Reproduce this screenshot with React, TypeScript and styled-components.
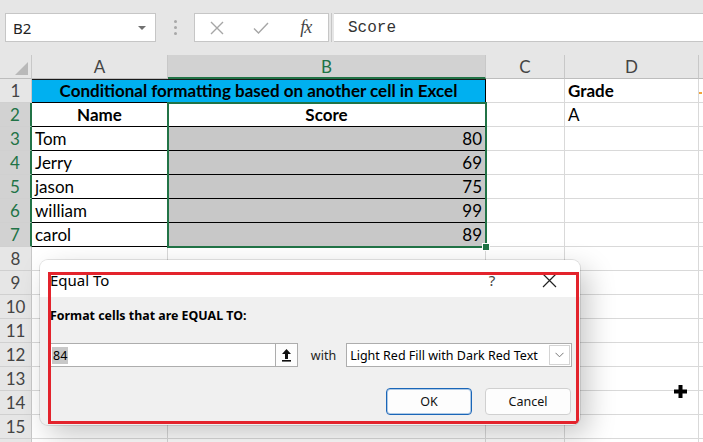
import React from 'react'
import styled, { createGlobalStyle } from 'styled-components'

const GREEN = '#217346'

const GlobalStyle = createGlobalStyle`
  html, body {
    margin: 0;
    padding: 0;
    background: #fff;
  }
  body {
    font-family: Lato, 'Noto Sans', sans-serif;
    overflow: hidden;
  }
`

const Page = styled.div`
  position: relative;
  width: 703px;
  height: 442px;
  overflow: hidden;
  background: #fff;
`

/* ---------- formula bar ---------- */

const FormulaBar = styled.div`
  height: 55px;
  box-sizing: border-box;
  padding: 13px 0 0 5px;
  background: #e6e6e6;
  display: flex;
  align-items: flex-start;
`

const NameBox = styled.div`
  width: 151px;
  height: 29px;
  box-sizing: border-box;
  background: #fff;
  border: 1px solid #c6c6c6;
  display: flex;
  align-items: center;
  justify-content: space-between;
  padding: 0 9px 0 7px;
  font-family: 'Noto Sans', sans-serif;
  font-size: 15px;
  color: #222;
`

const Caret = styled.span`
  width: 0;
  height: 0;
  border-left: 4px solid transparent;
  border-right: 4px solid transparent;
  border-top: 4px solid #707070;
`

const Grip = styled.div`
  width: 38px;
  height: 29px;
  display: flex;
  flex-direction: column;
  align-items: center;
  justify-content: center;
  gap: 3px;

  & span {
    width: 3px;
    height: 3px;
    border-radius: 50%;
    background: #a8a8a8;
  }
`

const ButtonGroup = styled.div`
  width: 135px;
  height: 29px;
  box-sizing: border-box;
  background: #fff;
  border: 1px solid #c6c6c6;
  display: flex;
`

const BarButton = styled.div`
  flex: 1;
  display: flex;
  align-items: center;
  justify-content: center;
`

const Fx = styled.span`
  font-family: 'Liberation Serif', serif;
  font-style: italic;
  font-size: 18px;
  color: #444;
  letter-spacing: -1px;
`

const BarDivider = styled.div`
  width: 1px;
  height: 29px;
  margin: 0 2px 0 2px;
  background: #c6c6c6;
`

const FormulaInput = styled.div`
  flex: 1;
  height: 29px;
  box-sizing: border-box;
  background: #fff;
  border-top: 1px solid #c6c6c6;
  border-bottom: 1px solid #c6c6c6;
  padding-left: 14px;
  display: flex;
  align-items: center;
  font-family: 'Liberation Mono', monospace;
  font-size: 16px;
  color: #333;
`

/* ---------- sheet ---------- */

const Sheet = styled.div`
  position: relative;
  display: grid;
  grid-template-columns: 32px 136px 318px 79px 134px 120px;
  grid-auto-rows: 24px;
`

const Corner = styled.div`
  position: relative;
  background: #e6e6e6;
  border-right: 1px solid #c8c8c8;
  border-bottom: 1px solid #bdbdbd;
  box-sizing: border-box;

  &::after {
    content: '';
    position: absolute;
    right: 3px;
    bottom: 3px;
    width: 0;
    height: 0;
    border-left: 13px solid transparent;
    border-bottom: 13px solid #b9b9b9;
  }
`

const ColHeader = styled.div<{ $active?: boolean }>`
  box-sizing: border-box;
  background: ${({ $active }) => ($active ? '#d2d2d2' : '#e6e6e6')};
  color: ${({ $active }) => ($active ? GREEN : '#444')};
  border-right: 1px solid #c8c8c8;
  border-bottom: ${({ $active }) => ($active ? `2px solid ${GREEN}` : '1px solid #bdbdbd')};
  display: flex;
  align-items: center;
  justify-content: center;
  font-size: 17px;
`

const RowHeader = styled.div<{ $active?: boolean }>`
  box-sizing: border-box;
  background: ${({ $active }) => ($active ? '#d2d2d2' : '#e6e6e6')};
  color: ${({ $active }) => ($active ? GREEN : '#444')};
  border-right: ${({ $active }) => ($active ? `2px solid ${GREEN}` : '1px solid #c8c8c8')};
  border-bottom: 1px solid #d0d0d0;
  display: flex;
  align-items: center;
  justify-content: center;
  font-size: 17px;
`

const Cell = styled.div<{
  $span?: number
  $bold?: boolean
  $align?: 'left' | 'center' | 'right'
  $fill?: string
  $table?: boolean
}>`
  grid-column: span ${({ $span }) => $span || 1};
  box-sizing: border-box;
  background: ${({ $fill }) => $fill || '#fff'};
  border-right: 1px solid ${({ $table }) => ($table ? '#000' : '#d9d9d9')};
  border-bottom: 1px solid ${({ $table }) => ($table ? '#000' : '#d9d9d9')};
  padding: 0 3px 1px 3px;
  display: flex;
  align-items: flex-end;
  justify-content: ${({ $align }) =>
    $align === 'center' ? 'center' : $align === 'right' ? 'flex-end' : 'flex-start'};
  font-size: 17px;
  line-height: 20px;
  font-weight: ${({ $bold }) => ($bold ? 700 : 400)};
  color: #000;
  white-space: nowrap;
  overflow: hidden;
`

const TitleCell = styled(Cell)`
  border-top: 1px solid #1a1a1a;
`

const OverflowMark = styled.span`
  width: 3px;
  height: 2px;
  margin: 0 0 7px -3px;
  background: #f2a43a;
`

const Selection = styled.div`
  position: absolute;
  left: 167px;
  top: 47px;
  width: 320px;
  height: 146px;
  box-sizing: border-box;
  border: 2px solid ${GREEN};
  pointer-events: none;

  &::after {
    content: '';
    position: absolute;
    right: -5px;
    bottom: -5px;
    width: 6px;
    height: 6px;
    background: ${GREEN};
    border: 1px solid #fff;
  }
`

/* ---------- dialog ---------- */

const Dialog = styled.div`
  position: absolute;
  left: 40px;
  top: 260px;
  width: 540px;
  height: 165px;
  background: #f0f0f0;
  border-radius: 8px;
  overflow: hidden;
  box-shadow: 8px 10px 28px rgba(0, 0, 0, 0.22), 0 0 0 1px rgba(0, 0, 0, 0.1);
  display: flex;
  flex-direction: column;
  font-family: 'Noto Sans', sans-serif;
  color: #000;
`

const TitleBar = styled.div`
  height: 37px;
  flex: none;
  box-sizing: border-box;
  background: #fff;
  padding: 10px 0 0 10px;
  display: flex;
  align-items: flex-start;
  font-size: 15px;
  line-height: 20px;
`

const TitleText = styled.span`
  flex: 1;
`

const Help = styled.span`
  width: 20px;
  margin-right: 37px;
  text-align: center;
  color: #444;
`

const Close = styled.span`
  width: 20px;
  margin-right: 21px;
  margin-top: 3px;
  display: flex;
  justify-content: center;
`

const Body = styled.div`
  flex: 1;
  padding: 11px 8px 0 10px;
  display: flex;
  flex-direction: column;
`

const Prompt = styled.div`
  font-size: 12.4px;
  line-height: 16px;
  font-weight: 700;
`

const InputRow = styled.div`
  margin-top: 19px;
  height: 24px;
  display: flex;
  align-items: center;
`

const ValueInput = styled.div`
  width: 225px;
  height: 24px;
  box-sizing: border-box;
  background: #fff;
  border: 1px solid #adadad;
  border-right: none;
  display: flex;
  align-items: center;
  padding-left: 1px;
  font-size: 12.5px;
`

const Selected = styled.span`
  background: #c8c8c8;
  padding: 0 1px;
  line-height: 17px;
`

const UploadButton = styled.div`
  width: 23px;
  height: 24px;
  box-sizing: border-box;
  background: #fdfdfd;
  border: 1px solid #adadad;
  display: flex;
  align-items: center;
  justify-content: center;
`

const WithLabel = styled.span`
  margin: 0 10px 0 13px;
  font-size: 12.5px;
  color: #222;
`

const SelectBox = styled.div`
  width: 226px;
  height: 24px;
  box-sizing: border-box;
  background: #fff;
  border: 1px solid #adadad;
  display: flex;
  align-items: center;
  padding: 1px 1px 1px 3px;
  font-size: 12.5px;
`

const SelectText = styled.span`
  flex: 1;
  white-space: nowrap;
`

const SelectArrow = styled.span`
  width: 21px;
  height: 20px;
  box-sizing: border-box;
  border: 1px solid #d4d4d4;
  display: flex;
  align-items: center;
  justify-content: center;
`

const ButtonRow = styled.div`
  margin-top: 21px;
  display: flex;
  justify-content: flex-end;
  gap: 13px;
  padding-right: 1px;
`

const DialogButton = styled.div<{ $primary?: boolean }>`
  width: 86px;
  height: 27px;
  box-sizing: border-box;
  border-radius: 4px;
  background: #fdfdfd;
  border: 1px solid ${({ $primary }) => ($primary ? '#1a66b8' : '#d0d0d0')};
  box-shadow: ${({ $primary }) => ($primary ? 'inset 0 0 0 1px rgba(26,102,184,0.35)' : 'none')};
  display: flex;
  align-items: center;
  justify-content: center;
  font-size: 12.5px;
  color: #111;
`

const Highlight = styled.div`
  position: absolute;
  left: 8px;
  top: 12px;
  width: 531px;
  height: 152px;
  box-sizing: border-box;
  border: 3px solid #e3232c;
  pointer-events: none;
`

const Cursor = styled.svg`
  position: absolute;
  left: 674px;
  top: 385px;
`

const cols = ['A', 'B', 'C', 'D', 'E']

const people = [
  { name: 'Tom', score: 80 },
  { name: 'Jerry', score: 69 },
  { name: 'jason', score: 75 },
  { name: 'william', score: 99 },
  { name: 'carol', score: 89 },
]

const Blank = () => (
  <>
    <Cell />
    <Cell />
    <Cell />
    <Cell />
    <Cell />
  </>
)

const App = () => {
  return (
    <Page>
      <GlobalStyle />
      <FormulaBar>
        <NameBox>
          B2
          <Caret />
        </NameBox>
        <Grip>
          <span />
          <span />
          <span />
        </Grip>
        <ButtonGroup>
          <BarButton>
            <svg width="14" height="14" viewBox="0 0 14 14">
              <path d="M1 1L13 13M13 1L1 13" stroke="#a6a6a6" strokeWidth="1.4" fill="none" />
            </svg>
          </BarButton>
          <BarButton>
            <svg width="16" height="14" viewBox="0 0 16 14">
              <path d="M1 7.5L5.5 12L15 2" stroke="#a6a6a6" strokeWidth="1.4" fill="none" />
            </svg>
          </BarButton>
          <BarButton>
            <Fx>fx</Fx>
          </BarButton>
        </ButtonGroup>
        <BarDivider />
        <FormulaInput>Score</FormulaInput>
      </FormulaBar>

      <Sheet>
        <Corner />
        {cols.map((c) => (
          <ColHeader key={c} $active={c === 'B'}>
            {c !== 'E' && c}
          </ColHeader>
        ))}

        <RowHeader>1</RowHeader>
        <TitleCell $span={2} $bold $align="center" $fill="#00b0f0" $table>
          Conditional formatting based on another cell in Excel
        </TitleCell>
        <Cell />
        <Cell $bold>Grade</Cell>
        <Cell>
          <OverflowMark />
        </Cell>

        <RowHeader $active>2</RowHeader>
        <Cell $bold $align="center" $table>
          Name
        </Cell>
        <Cell $bold $align="center" $table>
          Score
        </Cell>
        <Cell />
        <Cell>A</Cell>
        <Cell />

        {people.map((p, i) => (
          <React.Fragment key={p.name}>
            <RowHeader $active>{i + 3}</RowHeader>
            <Cell $table>{p.name}</Cell>
            <Cell $table $align="right" $fill="#c8c8c8">
              {p.score}
            </Cell>
            <Cell />
            <Cell />
            <Cell />
          </React.Fragment>
        ))}

        {Array.from({ length: 9 }, (_, i) => (
          <React.Fragment key={i}>
            <RowHeader>{i < 8 ? i + 8 : ''}</RowHeader>
            <Blank />
          </React.Fragment>
        ))}

        <Selection />
      </Sheet>

      <Dialog>
        <TitleBar>
          <TitleText>Equal To</TitleText>
          <Help>?</Help>
          <Close>
            <svg width="15" height="15" viewBox="0 0 15 15">
              <path d="M1 1L14 14M14 1L1 14" stroke="#222" strokeWidth="1.2" fill="none" />
            </svg>
          </Close>
        </TitleBar>
        <Body>
          <Prompt>Format cells that are EQUAL TO:</Prompt>
          <InputRow>
            <ValueInput>
              <Selected>84</Selected>
            </ValueInput>
            <UploadButton>
              <svg width="11" height="14" viewBox="0 0 11 14">
                <path d="M5.5 1L10 6H7V11H4V6H1Z" fill="#111" />
                <rect x="1" y="12" width="9" height="1.6" fill="#111" />
              </svg>
            </UploadButton>
            <WithLabel>with</WithLabel>
            <SelectBox>
              <SelectText>Light Red Fill with Dark Red Text</SelectText>
              <SelectArrow>
                <svg width="9" height="6" viewBox="0 0 9 6">
                  <path d="M0.5 0.8L4.5 4.8L8.5 0.8" stroke="#777" strokeWidth="1" fill="none" />
                </svg>
              </SelectArrow>
            </SelectBox>
          </InputRow>
          <ButtonRow>
            <DialogButton $primary>OK</DialogButton>
            <DialogButton>Cancel</DialogButton>
          </ButtonRow>
        </Body>
        <Highlight />
      </Dialog>

      <Cursor width="13" height="13" viewBox="0 0 13 13">
        <path d="M4.5 0H8.5V4.5H13V8.5H8.5V13H4.5V8.5H0V4.5H4.5Z" fill="#000" />
      </Cursor>
    </Page>
  )
}

export default App
